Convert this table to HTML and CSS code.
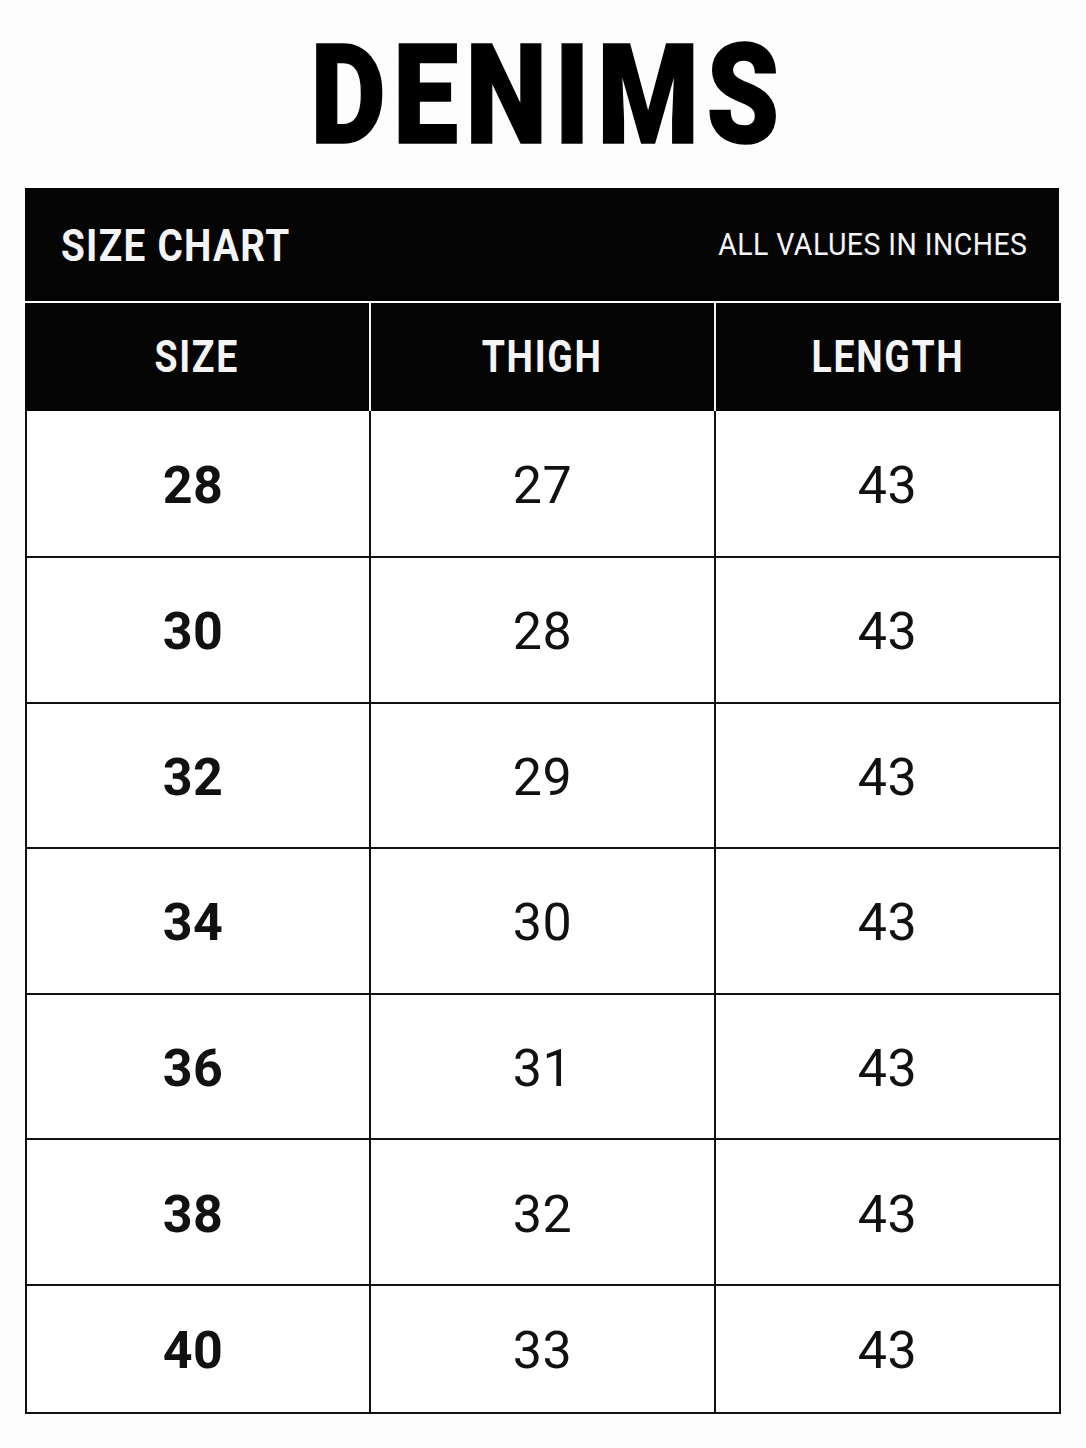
FILE: index.html
```html
<!DOCTYPE html>
<html lang="en">
<head>
<meta charset="utf-8">
<title>Denims Size Chart</title>
<link rel="stylesheet" href="styles.css">
</head>
<body>
<main class="page">
  <h1 class="title"><span class="title-text">DENIMS</span></h1>
  <section class="chart">
    <div class="chart-head">
      <span class="chart-name">SIZE CHART</span>
      <span class="chart-note">ALL VALUES IN INCHES</span>
    </div>
    <div class="grid">
      <div class="th"><span class="th-text">SIZE</span></div>
      <div class="th"><span class="th-text">THIGH</span></div>
      <div class="th"><span class="th-text">LENGTH</span></div>

      <div class="td size first">28</div><div class="td first">27</div><div class="td first">43</div>
      <div class="td size">30</div><div class="td">28</div><div class="td">43</div>
      <div class="td size">32</div><div class="td">29</div><div class="td">43</div>
      <div class="td size">34</div><div class="td">30</div><div class="td">43</div>
      <div class="td size">36</div><div class="td">31</div><div class="td">43</div>
      <div class="td size">38</div><div class="td">32</div><div class="td">43</div>
      <div class="td size last">40</div><div class="td last">33</div><div class="td last">43</div>
    </div>
  </section>
</main>
</body>
</html>
```

FILE: styles.css
```css
* { box-sizing: border-box; }
html, body { margin: 0; padding: 0; background: #fdfdfd; }
body { font-family: Roboto, "Liberation Sans", sans-serif; color: #111; }

.page { width: 1086px; padding: 25px 27px 0 25px; }

.title {
  margin: 0;
  height: 163px;
  font-size: 140px;
  line-height: 140px;
  font-weight: 900;
  text-align: center;
  color: #000;
}
.title-text {
  display: inline-block;
  letter-spacing: 9px;
  transform: scaleX(0.83);
  transform-origin: center;
  padding-left: 16px;
  -webkit-text-stroke: 1.5px #000;
}

.chart { width: 1034px; }

.chart-head {
  height: 113px;
  background: #050505;
  color: #f4f4f4;
  display: flex;
  align-items: center;
  justify-content: space-between;
  padding: 2px 32px 0 36px;
}
.chart-name {
  display: inline-block;
  font-size: 45px;
  font-weight: 700;
  letter-spacing: 1.5px;
  transform: scaleX(0.86);
  transform-origin: left center;
}
.chart-note {
  display: inline-block;
  font-size: 32px;
  font-weight: 400;
  letter-spacing: 0.5px;
  transform: scaleX(0.89);
  transform-origin: right center;
  margin-top: -4px;
}

.grid {
  margin-top: 2px;
  display: grid;
  grid-template-columns: 344px 345px 345px;
  border-left: 2px solid #111;
}

.th {
  height: 108px;
  background: #050505;
  color: #f4f4f4;
  display: flex;
  align-items: center;
  justify-content: center;
  border-right: 2px solid #f4f4f4;
}
.th:nth-child(3) { border-right: 2px solid #050505; }
.th:first-child { margin-left: -2px; width: 346px; }
.th-text {
  display: inline-block;
  font-size: 44px;
  font-weight: 700;
  letter-spacing: 2px;
  transform: scaleX(0.85);
}

.td {
  height: 145.6px;
  display: flex;
  align-items: center;
  justify-content: center;
  border-right: 2px solid #111;
  border-bottom: 2px solid #111;
  background: #fff;
  font-size: 52px;
  font-weight: 400;
  letter-spacing: 0.5px;
  padding-top: 4px;
}
.td.size { font-weight: 700; padding-right: 10px; }
.td.first { height: 147px; }
.td.last { height: 128px; }
```
